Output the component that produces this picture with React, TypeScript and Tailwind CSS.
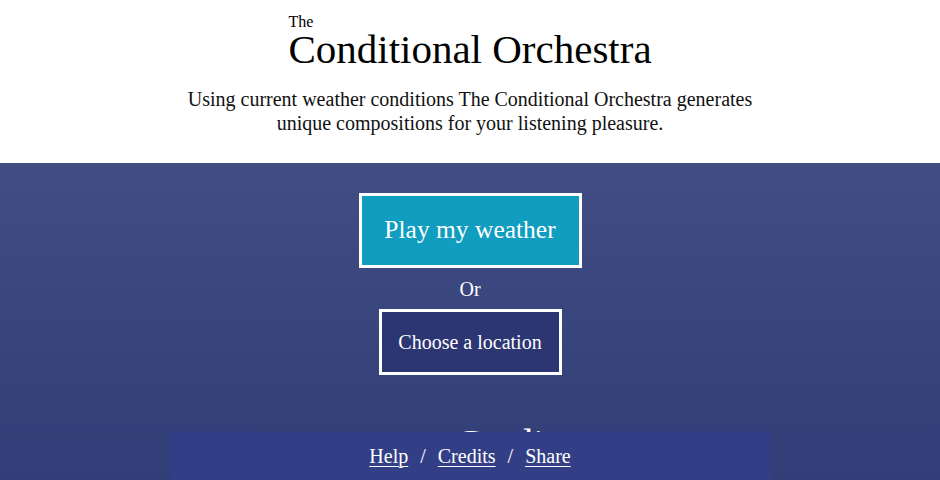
import React from "react";

const serif = { fontFamily: '"Liberation Serif", "DejaVu Serif", serif' };

export default function App() {
  return (
    <div className="w-full min-h-[480px] bg-white" style={serif}>
      <header className="bg-white pt-[15px] pb-[28px] flex flex-col items-center">
        <div className="flex flex-col items-start">
          <div className="text-[16px] leading-[14px] text-black">The</div>
          <h1 className="text-[41px] leading-[40px] text-black font-normal">Conditional Orchestra</h1>
        </div>
        <p className="mt-[18px] text-[20px] leading-[24px] text-[#111] text-center max-w-[580px]">
          Using current weather conditions The Conditional Orchestra generates unique compositions for your listening pleasure.
        </p>
      </header>
      <main className="min-h-[317px] bg-gradient-to-b from-[#414d83] to-[#313e77] flex flex-col items-center pt-[30px]">
        <button className="w-[223px] h-[75px] border-[3px] border-white bg-[#109dbf] text-white text-[25.5px] flex items-center justify-center">
          Play my weather
        </button>
        <div className="h-[41px] flex items-center justify-center text-white text-[20px]">Or</div>
        <button className="w-[183px] h-[66px] border-[3px] border-white bg-[#2b3673] text-white text-[20px] flex items-center justify-center">
          Choose a location
        </button>
        <h2 className="mt-[45px] pl-[86px] text-[40px] leading-[48px] text-white font-normal">Credits</h2>
      </main>
      <footer className="fixed bottom-0 left-1/2 -translate-x-1/2 w-[600px] h-[48px] bg-[#323f86] flex items-center justify-center text-white text-[20px]">
        <a href="#" className="underline underline-offset-[3px] decoration-1">Help</a>
        <span className="mx-[12px]">/</span>
        <a href="#" className="underline underline-offset-[3px] decoration-1">Credits</a>
        <span className="mx-[12px]">/</span>
        <a href="#" className="underline underline-offset-[3px] decoration-1">Share</a>
      </footer>
    </div>
  );
}
